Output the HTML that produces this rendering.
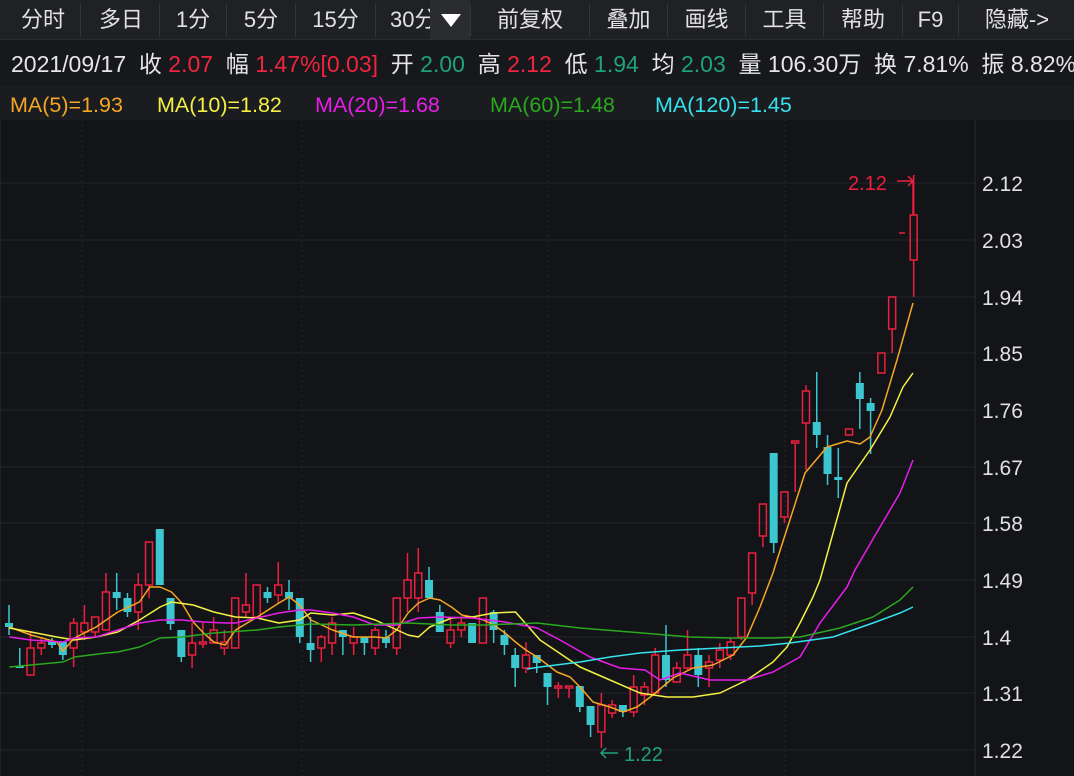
<!DOCTYPE html>
<html><head><meta charset="utf-8">
<style>
*{margin:0;padding:0;box-sizing:border-box}
body{width:1074px;height:776px;background:#131418;overflow:hidden;font-family:"Liberation Sans","Noto Sans CJK SC",sans-serif;color:#e6e6e6;position:relative}
.tb{position:absolute;left:0;top:0;width:1074px;height:40px;background:#1f2125;border-bottom:1px solid #2a2c30}
.tb span{position:absolute;top:0;height:40px;line-height:40px;font-size:22px;color:#e2e2e2;text-align:center;white-space:nowrap}
.sep{position:absolute;top:4px;width:1px;height:32px;background:#34363b}
.r2{position:absolute;left:0;top:40px;width:1074px;height:46px;background:#17181c;font-size:23px;line-height:48px;white-space:nowrap;padding-left:11px;overflow:hidden}
.r3{position:absolute;left:0;top:86px;width:1074px;height:34px;background:#1a1c20;font-size:21.5px;line-height:38px;white-space:nowrap}
.r3 span{position:absolute;top:0}
.red{color:#f0243f}.grn{color:#1fa274}
svg{position:absolute;left:0;top:0}
</style></head><body>
<div class="tb">
<span style="left:8px;width:70px">分时</span><div class="sep" style="left:80px"></div>
<span style="left:84px;width:74px">多日</span><div class="sep" style="left:159px"></div>
<span style="left:160px;width:66px">1分</span><div class="sep" style="left:226px"></div>
<span style="left:227px;width:68px">5分</span><div class="sep" style="left:295px"></div>
<span style="left:296px;width:79px">15分</span><div class="sep" style="left:375px"></div>
<span style="left:390px;text-align:left;overflow:hidden;width:40px">30分</span>
<div style="position:absolute;left:430px;top:0;width:40px;height:40px;background:#2a2c30"></div>
<div style="position:absolute;left:441px;top:14px;width:0;height:0;border-left:10px solid transparent;border-right:10px solid transparent;border-top:13px solid #fff"></div>
<div class="sep" style="left:470px"></div>
<span style="left:471px;width:118px">前复权</span><div class="sep" style="left:589px"></div>
<span style="left:590px;width:77px">叠加</span><div class="sep" style="left:667px"></div>
<span style="left:668px;width:77px">画线</span><div class="sep" style="left:745px"></div>
<span style="left:746px;width:77px">工具</span><div class="sep" style="left:823px"></div>
<span style="left:824px;width:78px">帮助</span><div class="sep" style="left:902px"></div>
<span style="left:903px;width:55px">F9</span><div class="sep" style="left:958px"></div>
<span style="left:960px;width:114px">隐藏-&gt;</span>
</div>
<div class="r2">2021/09/17&nbsp; 收 <span class="red">2.07</span>&nbsp; 幅 <span class="red">1.47%[0.03]</span>&nbsp; 开 <span class="grn">2.00</span>&nbsp; 高 <span class="red">2.12</span>&nbsp; 低 <span class="grn">1.94</span>&nbsp; 均 <span class="grn">2.03</span>&nbsp; 量 106.30万&nbsp; 换 7.81%&nbsp; 振 8.82%</div>
<div class="r3">
<span style="left:10px;color:#f5a623">MA(5)=1.93</span>
<span style="left:157px;color:#f4f043">MA(10)=1.82</span>
<span style="left:315px;color:#e81ee8">MA(20)=1.68</span>
<span style="left:490px;color:#2aa81e">MA(60)=1.48</span>
<span style="left:655px;color:#35e2ee">MA(120)=1.45</span>
</div>
<svg id="c" width="1074" height="776" style="top:0"></svg>
<script>
var s='';
var grid=[183,240,297,353,410,467,523,580,637,693,750];
var labs=['2.12','2.03','1.94','1.85','1.76','1.67','1.58','1.49','1.4','1.31','1.22'];
grid.forEach(function(y,i){s+='<line x1="0" y1="'+y+'" x2="975" y2="'+y+'" stroke="#22252a" stroke-width="1"/>';
s+='<text x="982" y="'+(y+8)+'" fill="#e0e0e0" font-size="21" font-family="Liberation Sans">'+labs[i]+'</text>';});
[82,302,548,785].forEach(function(x){s+='<line x1="'+x+'" y1="120" x2="'+x+'" y2="776" stroke="#23262b" stroke-dasharray="2,3"/>';});
s+='<line x1="975" y1="120" x2="975" y2="776" stroke="#2a2d32"/>';
s+='<line x1="0" y1="120" x2="0" y2="776" stroke="#2a2d32"/>';
var d=[
[605,623,627,635,'c'],[648,666,668,668,'c'],[632,648,675,675,'r'],[638,643,648,655,'r'],[638,641,645,648,'c'],
[642,642,655,660,'c'],[618,623,648,667,'r'],[605,623,632,640,'r'],[617,617,632,637,'r'],[573,592,630,630,'r'],
[573,592,598,610,'c'],[593,598,612,617,'c'],[573,585,612,630,'r'],[542,542,585,598,'r'],[529,529,585,585,'c'],
[598,598,624,630,'c'],[630,630,657,662,'c'],[623,643,655,668,'r'],[623,642,644,648,'r'],[617,630,643,643,'r'],
[630,642,648,655,'r'],[598,598,648,648,'r'],[573,605,612,618,'r'],[585,585,617,617,'r'],[587,592,598,603,'c'],
[562,585,595,603,'r'],[580,592,598,610,'c'],[598,598,637,643,'c'],[617,643,650,662,'c'],[635,637,648,662,'r'],
[617,623,643,655,'r'],[630,630,637,655,'c'],[627,637,643,655,'r'],[637,637,643,655,'c'],[627,630,648,655,'r'],
[630,637,643,648,'c'],[598,598,648,655,'r'],[553,580,598,612,'r'],[548,573,598,612,'r'],[567,580,598,598,'c'],
[605,612,632,632,'c'],[617,630,643,648,'r'],[617,623,630,637,'r'],[623,623,643,643,'c'],[598,598,643,643,'r'],
[610,612,630,643,'c'],[630,635,645,655,'c'],[648,655,668,687,'c'],[642,655,668,673,'r'],[655,655,663,673,'c'],
[673,673,687,705,'c'],[682,686,688,698,'r'],[686,686,688,698,'r'],[686,686,707,712,'c'],[706,706,725,737,'c'],
[693,705,732,748,'r'],[700,705,713,718,'r'],[705,705,712,717,'c'],[675,687,712,717,'r'],[682,687,695,705,'r'],
[648,655,693,693,'r'],[625,655,680,687,'c'],[662,668,682,682,'r'],[630,655,668,670,'r'],[648,655,675,687,'c'],
[655,662,668,687,'r'],[643,650,660,668,'r'],[638,642,655,660,'r'],[598,598,637,640,'r'],[553,553,593,605,'r'],
[504,504,536,547,'r'],[453,453,543,553,'c'],[492,492,517,523,'r'],[441,441,443,492,'r'],[385,391,423,470,'r'],
[372,422,435,448,'c'],[435,447,474,485,'c'],[448,477,480,498,'c'],[429,429,435,435,'r'],[372,383,399,429,'c'],
[398,403,411,454,'c'],[353,353,373,373,'r'],[297,297,329,353,'r'],null,[175,215,260,297,'r']];
d.forEach(function(c,i){if(!c)return;var x=9+i*10.77;
if(c[4]=='r'){var col='#ec1f3e';
s+='<line x1="'+x+'" y1="'+c[0]+'" x2="'+x+'" y2="'+c[1]+'" stroke="'+col+'" stroke-width="1.5"/>';
s+='<line x1="'+x+'" y1="'+c[2]+'" x2="'+x+'" y2="'+c[3]+'" stroke="'+col+'" stroke-width="1.5"/>';
var h=Math.max(c[2]-c[1],1.5);
s+='<rect x="'+(x-3.5)+'" y="'+c[1]+'" width="7" height="'+h+'" fill="none" stroke="'+col+'" stroke-width="1.5"/>';}
else{var col='#3cc6cf';
s+='<line x1="'+x+'" y1="'+c[0]+'" x2="'+x+'" y2="'+c[3]+'" stroke="'+col+'" stroke-width="1.5"/>';
s+='<rect x="'+(x-4)+'" y="'+c[1]+'" width="8" height="'+Math.max(c[2]-c[1],2)+'" fill="'+col+'"/>';}
});
s+='<line x1="899" y1="233" x2="905" y2="233" stroke="#ec1f3e" stroke-width="1.5"/>';
function pl(a,b,col){
var p=a.split(' ').map(function(q){var v=q.split(',');return (v[0]*1.033).toFixed(1)+','+v[1];}).join(' ');
s+='<polyline points="'+p+' '+b+'" fill="none" stroke="'+col+'" stroke-width="1.5" stroke-linejoin="round"/>';}
pl('9,627 30,635 55,642 61,651 72,638 93,627 114,612 135,602 145,587 155,587 166,592 176,603 187,622 197,633 207,642 218,645 228,630 249,617 270,603 280,597 290,605 301,620 322,630 342,637 363,637 374,638 384,630 395,613 405,603 416,598 426,600 437,607 447,615 457,617 468,620 478,625 489,633 499,642 509,650 520,657',
'557,672 570,677 580,687 593,702 610,707 623,712 637,707 653,695 673,678 693,668 713,665 733,655 747,637 760,607 773,573 777,560 805,473 827,447 847,441 860,444 870,437 882,410 897,360 913,303','#f5a623');
pl('9,628 30,632 55,637 72,640 93,637 114,632 135,620 155,607 166,602 187,605 207,612 228,617 249,618 270,623 290,620 301,613 322,615 342,613 363,620 374,625 395,635 405,637 416,627 437,618 457,617 478,613 499,612',
'540,640 580,667 610,680 640,693 667,697 693,697 720,693 747,680 773,662 787,647 800,623 813,597 820,580 847,483 870,450 890,417 903,387 913,373','#f4f043');
pl('9,637 30,640 61,642 72,638 93,637 114,630 135,623 155,620 176,620 197,622 218,623 228,623 249,618 270,613 290,610 301,610 322,613 342,617 363,625 384,625 405,618 426,617 457,618 489,622 520,628',
'560,640 590,657 620,668 645,670 660,680 680,673 710,680 747,680 773,672 800,657 820,623 847,587 855,570 880,527 900,493 913,460','#e81ee8');
pl('9,667 30,665 61,662 72,657 103,653 114,652 135,647 155,638 176,637 207,633 249,630 270,627 301,624 342,625 395,623 437,625 468,625 520,623',
'580,628 630,632 690,637 730,638 773,638 800,637 840,628 873,617 900,600 913,587','#2aa81e');
s+='<polyline points="527,669 540,667 580,662 610,657 640,653 680,650 720,648 760,646 790,643 833,637 873,623 900,613 913,607" fill="none" stroke="#35e2ee" stroke-width="1.5"/>';
s+='<text x="848" y="190" fill="#ec1f3e" font-size="20" font-family="Liberation Sans">2.12</text>';
s+='<path d="M897 181 H913 M908 176 L913 181 L908 186 M913 181 V215" stroke="#ec1f3e" stroke-width="1.5" fill="none"/>';
s+='<path d="M601 753 H618 M606 748 L601 753 L606 758" stroke="#1fa274" stroke-width="1.5" fill="none"/>';
s+='<text x="624" y="761" fill="#1fa274" font-size="20" font-family="Liberation Sans">1.22</text>';
document.getElementById('c').innerHTML=s;
</script>
</body></html>
